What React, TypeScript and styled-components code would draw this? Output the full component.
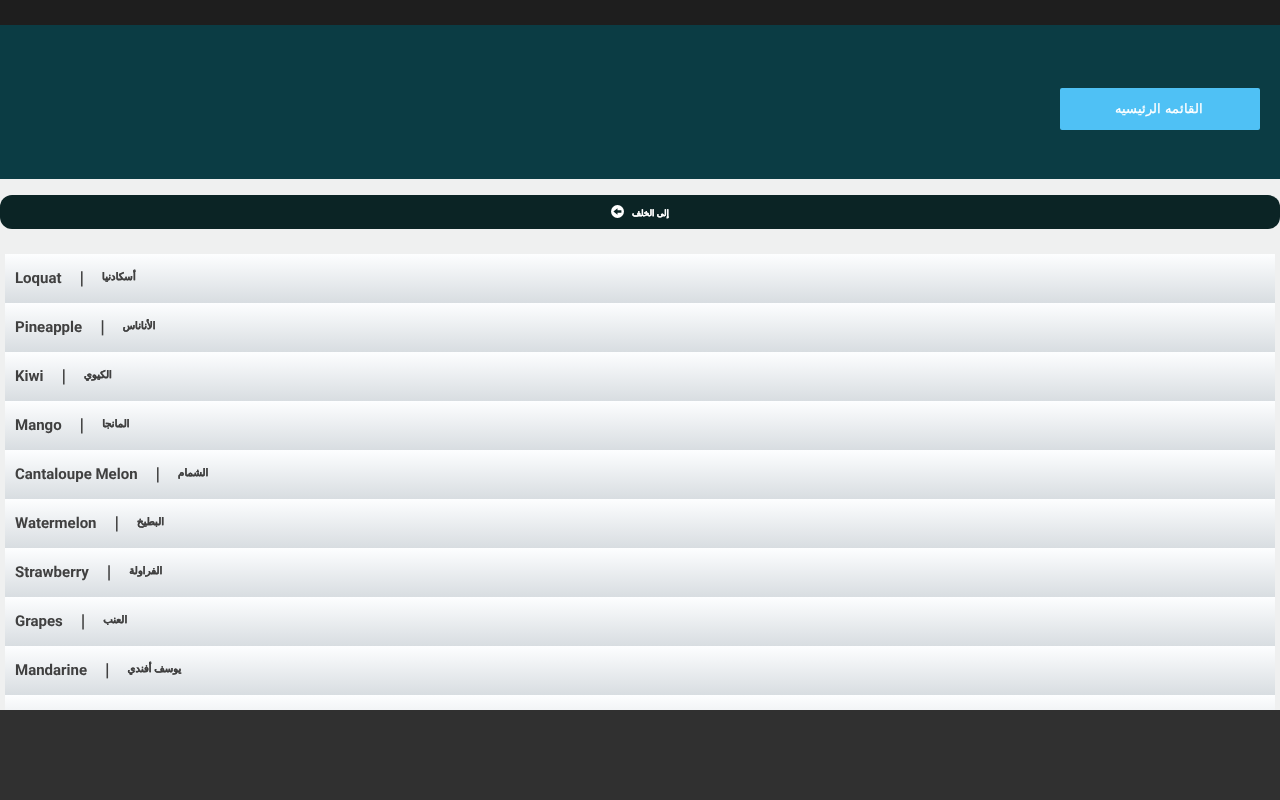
import styled, { createGlobalStyle } from "styled-components";

const fruits = [
  { en: "Loquat", ar: "أسكادنيا" },
  { en: "Pineapple", ar: "الأناناس" },
  { en: "Kiwi", ar: "الكيوي" },
  { en: "Mango", ar: "المانجا" },
  { en: "Cantaloupe Melon", ar: "الشمام" },
  { en: "Watermelon", ar: "البطيخ" },
  { en: "Strawberry", ar: "الفراولة" },
  { en: "Grapes", ar: "العنب" },
  { en: "Mandarine", ar: "يوسف أفندي" },
];

export default function App() {
  return (
    <>
      <GlobalStyle />
      <Page>
        <Content>
          <TopBar />
          <Header>
            <MenuButton>القائمه الرئيسيه</MenuButton>
          </Header>
          <BackBar>
            <BackIcon viewBox="0 0 14 14">
              <circle cx="7" cy="7" r="7" fill="#fff" />
              <path d="M2.6 7 7 3.4v2.3h4.2v2.6H7v2.3z" fill="#0b2425" />
            </BackIcon>
            <BackLabel>إلى الخلف</BackLabel>
          </BackBar>
          <FruitList>
            {fruits.map((fruit) => (
              <FruitRow key={fruit.en}>
                <FruitName>{fruit.en}</FruitName>
                <Divider>|</Divider>
                <FruitArabic>{fruit.ar}</FruitArabic>
              </FruitRow>
            ))}
            <FruitRow />
          </FruitList>
        </Content>
        <Footer />
      </Page>
    </>
  );
}

const GlobalStyle = createGlobalStyle`
  html, body {
    margin: 0;
    height: 100%;
    overflow: hidden;
    background: #eff0f0;
    font-family: Roboto, sans-serif;
    text-rendering: geometricPrecision;
  }
`;

const Page = styled.div`
  display: flex;
  flex-direction: column;
  height: 800px;
`;

const Content = styled.main`
  flex: 1;
  min-height: 0;
  overflow: hidden;
  will-change: transform;
`;

const TopBar = styled.div`
  height: 25px;
  background: #1e1e1e;
`;

const Header = styled.header`
  height: 154px;
  background: #0b3c44;
  display: flex;
  justify-content: flex-end;
  padding: 63px 20px 0;
  box-sizing: border-box;
`;

const MenuButton = styled.button`
  width: 200px;
  height: 42px;
  padding: 0 2px 2px 0;
  border: 0;
  border-radius: 2px;
  background: #4fc1f5;
  color: #fff;
  font-family: Roboto, sans-serif;
  font-size: 12.5px;
  font-weight: 500;
  -webkit-text-stroke: 0.25px #fff;
`;

const BackBar = styled.div`
  height: 34px;
  margin-top: 16px;
  border-radius: 12px;
  background: #0b2425;
  display: flex;
  align-items: center;
  justify-content: center;
  gap: 8px;
`;

const BackIcon = styled.svg`
  width: 13px;
  height: 13px;
  margin-top: -2px;
`;

const BackLabel = styled.span`
  margin-top: 3px;
  color: #fff;
  font-size: 8.7px;
  font-weight: 700;
  direction: rtl;
  -webkit-text-stroke: 0.2px #fff;
`;

const FruitList = styled.ul`
  list-style: none;
  margin: 25px 5px 0;
  padding: 0;
`;

const FruitRow = styled.li`
  height: 49px;
  padding: 0 10px;
  display: flex;
  align-items: center;
  background: linear-gradient(#fdfeff, #d8dde1);
  color: #404040;
`;

const FruitName = styled.span`
  margin-top: -2px;
  font-size: 15px;
  font-weight: 700;
`;

const Divider = styled.span`
  margin: 0 18px;
  font-size: 18px;
  font-weight: 700;
`;

const FruitArabic = styled.span`
  margin-top: -3px;
  font-size: 10.2px;
  font-weight: 700;
  direction: rtl;
  -webkit-text-stroke: 0.2px #404040;
`;

const Footer = styled.footer`
  height: 90px;
  flex: none;
  background: #303030;
`;
